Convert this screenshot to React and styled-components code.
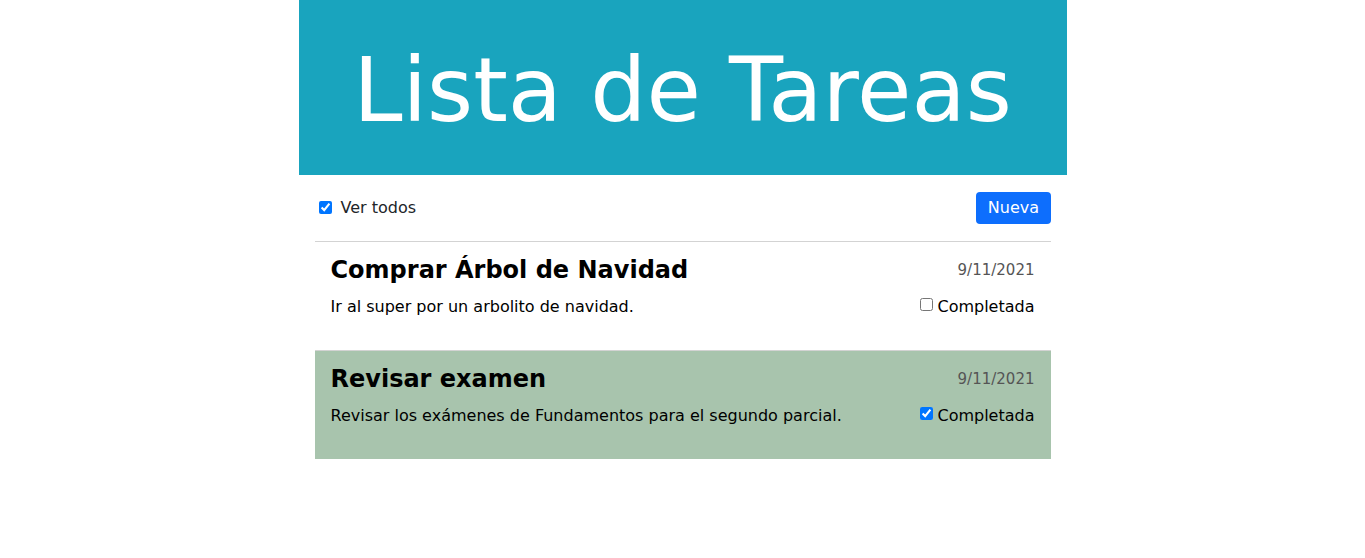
import React, { useState } from 'react';
import styled, { createGlobalStyle } from 'styled-components';

const GlobalStyle = createGlobalStyle`
  body {
    margin: 0;
    font-family: "DejaVu Sans", Verdana, sans-serif;
    font-size: 16px;
    line-height: 1.5;
    color: #212529;
    background: #fff;
  }
`;

const Page = styled.div`
  width: 768px;
  margin: 0 auto;
`;

const Header = styled.header`
  background: #19a4be;
  padding: 38.3px 0 30.5px;
  text-align: center;
`;

const Title = styled.h1`
  margin: 0;
  font-size: 88.5px;
  font-weight: 400;
  line-height: 1.2;
  color: #fff;
`;

const Content = styled.main`
  padding: 0 16px;
`;

const Toolbar = styled.div`
  display: flex;
  align-items: center;
  justify-content: space-between;
  padding: 17px 0;
  border-bottom: 1px solid #d3d3d3;
`;

const Check = styled.label`
  display: flex;
  align-items: center;
  cursor: pointer;

  input {
    margin: 3px 9px 3px 4px;
  }
`;

const Button = styled.button`
  font-family: inherit;
  font-size: 16px;
  line-height: 1.5;
  color: #fff;
  background: #0d6efd;
  border: none;
  border-radius: 4px;
  padding: 4px 11.5px;
  cursor: pointer;
`;

const List = styled.ul`
  list-style: none;
  margin: 0;
  padding: 0;
`;

const Item = styled.li`
  padding: 14.5px 16px 31.2px;
  background: ${({ done }) => (done ? '#a8c4ad' : 'transparent')};

  & + & {
    border-top: 1px solid #d3d3d3;
  }
`;

const Row = styled.div`
  display: flex;
  align-items: ${({ top }) => (top ? 'flex-start' : 'center')};
  justify-content: space-between;
`;

const ItemTitle = styled.h4`
  margin: 0 0 9.5px;
  font-size: 24px;
  font-weight: 700;
  line-height: 1.2;
  color: #000;
`;

const Date = styled.span`
  margin-top: 2.5px;
  font-size: 15px;
  color: #555;
`;

const Desc = styled.p`
  margin: 0;
  color: #000;
`;

const Done = styled.label`
  display: flex;
  align-items: center;
  color: #000;

  input {
    margin: 1px 4px 5px 4px;
  }
`;

const initial = [
  {
    id: 1,
    title: 'Comprar Árbol de Navidad',
    date: '9/11/2021',
    desc: 'Ir al super por un arbolito de navidad.',
    done: false,
  },
  {
    id: 2,
    title: 'Revisar examen',
    date: '9/11/2021',
    desc: 'Revisar los exámenes de Fundamentos para el segundo parcial.',
    done: true,
  },
];

const App = () => {
  const [tasks, setTasks] = useState(initial);
  const [all, setAll] = useState(true);

  const toggle = (id) =>
    setTasks((t) => t.map((x) => (x.id === id ? { ...x, done: !x.done } : x)));

  return (
    <Page>
      <GlobalStyle />
      <Header>
        <Title>Lista de Tareas</Title>
      </Header>
      <Content>
        <Toolbar>
          <Check>
            <input type="checkbox" checked={all} onChange={() => setAll(!all)} />
            Ver todos
          </Check>
          <Button>Nueva</Button>
        </Toolbar>
        <List>
          {tasks
            .filter((t) => all || !t.done)
            .map((t) => (
              <Item key={t.id} done={t.done}>
                <Row top>
                  <ItemTitle>{t.title}</ItemTitle>
                  <Date>{t.date}</Date>
                </Row>
                <Row>
                  <Desc>{t.desc}</Desc>
                  <Done>
                    <input type="checkbox" checked={t.done} onChange={() => toggle(t.id)} />
                    Completada
                  </Done>
                </Row>
              </Item>
            ))}
        </List>
      </Content>
    </Page>
  );
};

export default App;
